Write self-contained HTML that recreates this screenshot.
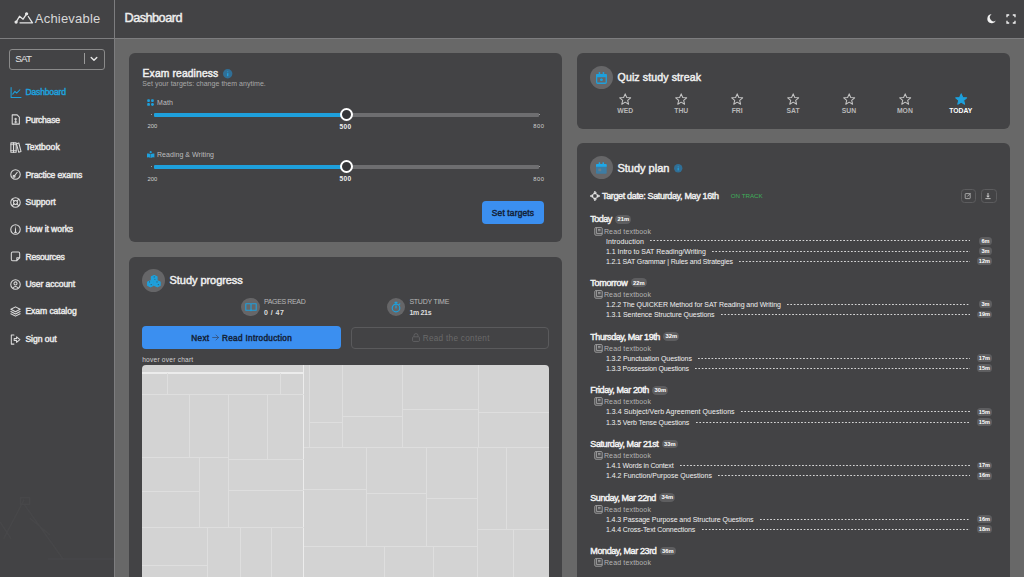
<!DOCTYPE html>
<html><head><meta charset="utf-8"><title>Dashboard</title>
<style>
html,body{margin:0;padding:0;width:1024px;height:577px;overflow:hidden;background:#686868;}
body{position:relative;font-family:"Liberation Sans",sans-serif;}
.t{position:absolute;white-space:pre;line-height:1;}
svg{overflow:visible}
</style></head><body>
<div style="position:absolute;left:0px;top:0px;width:1024px;height:38px;background:#434345;"></div>
<div style="position:absolute;left:0px;top:38px;width:1024px;height:1px;background:#7d7d7f;"></div>
<div style="position:absolute;left:0px;top:39px;width:114px;height:538px;background:#434345;"></div>
<div style="position:absolute;left:114px;top:0px;width:1px;height:577px;background:#7d7d7f;"></div>
<div style="position:absolute;left:129px;top:53px;width:433px;height:189px;background:#434345;border-radius:6px"></div>
<div style="position:absolute;left:129px;top:256.5px;width:433px;height:330px;background:#434345;border-radius:6px"></div>
<div style="position:absolute;left:577px;top:53px;width:433px;height:76px;background:#434345;border-radius:6px"></div>
<div style="position:absolute;left:577px;top:143px;width:433px;height:450px;background:#434345;border-radius:6px"></div>
<svg style="position:absolute;left:0;top:490px" width="114" height="80" viewBox="0 0 114 80" fill="none" stroke="#474749" stroke-width="1.4" stroke-linejoin="round"><path d="M3.7 48.6L24.1 9.7M24.1 14.3L63 69M48 69H114M0 32L11 48.6M29.7 28L50 45"/><rect x="20.4" y="7.8" width="9.3" height="6.5"/></svg>
<svg style="position:absolute;left:0;top:0" width="40" height="30" viewBox="0 0 40 30" fill="none" stroke="#e6e6e6" stroke-width="1.3" stroke-linecap="round" stroke-linejoin="round"><path d="M16.1 22.1L19.5 16.3L23.1 19.2L26.6 13.8"/><path d="M28.3 16.5L32.5 22.8H20"/><circle cx="16.1" cy="22.1" r="1" fill="#e6e6e6"/><circle cx="26.6" cy="13.8" r="1" fill="#e6e6e6"/></svg>
<svg style="position:absolute;left:987px;top:13.5px" width="9" height="9.2" viewBox="0 0 9 9.2"><path d="M4.6 0.2A4.5 4.5 0 1 0 8.9 6.6A3.2 3.2 0 0 1 4.6 0.2Z" fill="#f2f2f2"/></svg>
<svg style="position:absolute;left:1005.5px;top:13.5px" width="10" height="10" viewBox="0 0 10 10" fill="none" stroke="#f2f2f2" stroke-width="1.3"><path d="M1 3.2V1H3.2M6.8 1H9V3.2M9 6.8V9H6.8M3.2 9H1V6.8"/></svg>
<div style="position:absolute;left:9px;top:48.5px;width:94px;height:19px;border:1px solid #8a8a8a;border-radius:3px"></div>
<div style="position:absolute;left:83.5px;top:53.3px;width:1px;height:11px;background:#9a9a9a;"></div>
<svg style="position:absolute;left:89px;top:55px" width="10" height="8" viewBox="0 0 10 8" fill="none" stroke="#e6e6e6" stroke-width="1.4" stroke-linecap="round" stroke-linejoin="round"><path d="M2.2 2.4L5 5.2L7.8 2.4"/></svg>
<svg style="position:absolute;left:10px;top:86.9px" width="11" height="11" viewBox="0 0 10 10" fill="none" stroke-width="0.95" stroke-linecap="round" stroke-linejoin="round"><path d="M1 0.5V9.5H10" stroke="#1ea0dc"/><path d="M2.5 6.5L4.5 4L6 5.5L9 2.5" stroke="#1ea0dc"/></svg>
<svg style="position:absolute;left:10px;top:114.3px" width="11" height="11" viewBox="0 0 10 10" fill="none" stroke-width="0.95" stroke-linecap="round" stroke-linejoin="round"><path d="M2 0.8H6.5L8.5 2.8V9.2H2Z" stroke="#dcdcdc"/><path d="M5.2 3.8V8M4.2 4.6H6 M4.3 7.2H6.2" stroke="#dcdcdc"/></svg>
<svg style="position:absolute;left:10px;top:141.7px" width="11" height="11" viewBox="0 0 10 10" fill="none" stroke-width="0.95" stroke-linecap="round" stroke-linejoin="round"><rect x="0.8" y="0.8" width="2.4" height="8.6" stroke="#dcdcdc"/><rect x="3.2" y="0.8" width="2.4" height="8.6" stroke="#dcdcdc"/><path d="M5.9 1.6L8 0.9L10 8.6L7.9 9.3Z" stroke="#dcdcdc"/><path d="M0.8 2.4H5.6M0.8 7.8H5.6" stroke="#dcdcdc" stroke-width="0.7"/></svg>
<svg style="position:absolute;left:10px;top:169.1px" width="11" height="11" viewBox="0 0 10 10" fill="none" stroke-width="0.95" stroke-linecap="round" stroke-linejoin="round"><circle cx="5" cy="5" r="4.3" stroke="#dcdcdc"/><path d="M3.8 6.6L6.6 3" stroke="#dcdcdc"/><circle cx="3.7" cy="6.6" r="0.9" stroke="#dcdcdc"/></svg>
<svg style="position:absolute;left:10px;top:196.5px" width="11" height="11" viewBox="0 0 10 10" fill="none" stroke-width="0.95" stroke-linecap="round" stroke-linejoin="round"><circle cx="5" cy="5" r="4.3" stroke="#dcdcdc"/><circle cx="5" cy="5" r="1.8" stroke="#dcdcdc"/><path d="M2 2L3.7 3.7M8 2L6.3 3.7M2 8L3.7 6.3M8 8L6.3 6.3" stroke="#dcdcdc"/></svg>
<svg style="position:absolute;left:10px;top:223.9px" width="11" height="11" viewBox="0 0 10 10" fill="none" stroke-width="0.95" stroke-linecap="round" stroke-linejoin="round"><circle cx="5" cy="5" r="4.3" stroke="#dcdcdc"/><path d="M5 4.2V7.6M4.2 7.6H5.8" stroke="#dcdcdc"/><circle cx="5" cy="2.7" r="0.5" fill="#dcdcdc" stroke="none"/></svg>
<svg style="position:absolute;left:10px;top:251.3px" width="11" height="11" viewBox="0 0 10 10" fill="none" stroke-width="0.95" stroke-linecap="round" stroke-linejoin="round"><path d="M1.2 2.2Q1.2 1 2.4 1H7.6Q8.8 1 8.8 2.2V6.2L6.2 8.8H2.4Q1.2 8.8 1.2 7.6Z M8.8 6.2H6.2V8.8" stroke="#dcdcdc"/></svg>
<svg style="position:absolute;left:10px;top:278.7px" width="11" height="11" viewBox="0 0 10 10" fill="none" stroke-width="0.95" stroke-linecap="round" stroke-linejoin="round"><circle cx="5" cy="5" r="4.3" stroke="#dcdcdc"/><circle cx="5" cy="4" r="1.4" stroke="#dcdcdc"/><path d="M2.6 8.2Q5 5.6 7.4 8.2" stroke="#dcdcdc"/></svg>
<svg style="position:absolute;left:10px;top:306.1px" width="11" height="11" viewBox="0 0 10 10" fill="none" stroke-width="0.95" stroke-linecap="round" stroke-linejoin="round"><path d="M5 0.8L9.2 3L5 5.2L0.8 3Z M0.8 5L5 7.2L9.2 5 M0.8 7L5 9.2L9.2 7" stroke="#dcdcdc"/></svg>
<svg style="position:absolute;left:10px;top:333.5px" width="11" height="11" viewBox="0 0 10 10" fill="none" stroke-width="0.95" stroke-linecap="round" stroke-linejoin="round"><path d="M3.6 1H1.2V9.2H3.6" stroke="#dcdcdc"/><path d="M3.8 4.2H6V2.6L9 5.1L6 7.6V6H3.8Z" stroke="#dcdcdc"/></svg>
<svg style="position:absolute;left:223.1px;top:69.1px" width="9.4" height="9.4" viewBox="0 0 10 10"><circle cx="5" cy="5" r="5" fill="#306f96"/><rect x="4.3" y="4.3" width="1.4" height="3.4" rx="0.5" fill="#22a2dd"/><circle cx="5" cy="2.9" r="0.7" fill="#2a8cbf"/></svg>
<svg style="position:absolute;left:673.9px;top:163.7px" width="8.4" height="8.4" viewBox="0 0 10 10"><circle cx="5" cy="5" r="5" fill="#306f96"/><rect x="4.3" y="4.3" width="1.4" height="3.4" rx="0.5" fill="#22a2dd"/><circle cx="5" cy="2.9" r="0.7" fill="#2a8cbf"/></svg>
<svg style="position:absolute;left:147px;top:98.8px" width="7" height="7" viewBox="0 0 7 7" fill="#1ea0dc"><rect x="0.2" y="0.2" width="2.7" height="2.7" rx="0.9"/><rect x="4.1" y="0.2" width="2.7" height="2.7" rx="0.9"/><rect x="0.2" y="4.1" width="2.7" height="2.7" rx="0.9"/><circle cx="5.45" cy="5.45" r="1.45"/></svg>
<svg style="position:absolute;left:146.7px;top:150.5px" width="7.4" height="7" viewBox="0 0 7.4 7" fill="#1ea0dc"><path d="M0 2.6Q1.9 2 3.5 3V7Q1.9 6 0 6.6Z M7.4 2.6Q5.5 2 3.9 3V7Q5.5 6 7.4 6.6Z"/><circle cx="3.7" cy="1.2" r="1.1"/></svg>
<div style="position:absolute;left:153.5px;top:113.0px;width:193px;height:3.6px;background:#1ea0dc;border-radius:1px"></div>
<div style="position:absolute;left:346px;top:113.0px;width:192.5px;height:3.6px;background:#6e6e70;border-radius:1px"></div>
<div style="position:absolute;left:151.2px;top:114.2px;width:1.3px;height:1.3px;background:#9a9a9a;"></div>
<div style="position:absolute;left:538.5px;top:114.2px;width:1.3px;height:1.3px;background:#9a9a9a;"></div>
<div style="position:absolute;left:339.7px;top:108.1px;width:9.4px;height:9.4px;border-radius:50%;border:2px solid #ffffff;background:#363638"></div>
<div style="position:absolute;left:153.5px;top:165.0px;width:193px;height:3.6px;background:#1ea0dc;border-radius:1px"></div>
<div style="position:absolute;left:346px;top:165.0px;width:192.5px;height:3.6px;background:#6e6e70;border-radius:1px"></div>
<div style="position:absolute;left:151.2px;top:166.20000000000002px;width:1.3px;height:1.3px;background:#9a9a9a;"></div>
<div style="position:absolute;left:538.5px;top:166.20000000000002px;width:1.3px;height:1.3px;background:#9a9a9a;"></div>
<div style="position:absolute;left:339.7px;top:160.1px;width:9.4px;height:9.4px;border-radius:50%;border:2px solid #ffffff;background:#363638"></div>
<div style="position:absolute;left:482px;top:201px;width:62.4px;height:22.8px;background:#3b8ff0;border-radius:4px"></div>
<div style="position:absolute;left:142.0px;top:269.3px;width:23px;height:23px;border-radius:50%;background:#666668"></div>
<svg style="position:absolute;left:146px;top:273.5px" width="16" height="15" viewBox="0 0 16 15" stroke-linejoin="round"><g fill="#1ea0dc" stroke="#1ea0dc" stroke-width="1.2"><path d="M8.2 1.6L11 2.9V6.1L8.2 7.4L5.4 6.1V2.9Z"/><path d="M4.5 6.8L7.3 8.1V11.5L4.5 12.8L1.7 11.5V8.1Z"/><path d="M11.3 6.8L14.1 8.1V11.5L11.3 12.8L8.5 11.5V8.1Z"/></g><g fill="#3c5560"><circle cx="8.2" cy="2.9" r="0.55"/><circle cx="8.9" cy="5.3" r="0.55"/><circle cx="3.6" cy="7.9" r="0.55"/><circle cx="5.2" cy="10.6" r="0.55"/><circle cx="11" cy="7.9" r="0.55"/><circle cx="12.3" cy="10.6" r="0.55"/></g></svg>
<div style="position:absolute;left:241.4px;top:297.7px;width:18.6px;height:18.6px;border-radius:50%;background:#666668"></div>
<svg style="position:absolute;left:244.6px;top:302.6px" width="12" height="8.6" viewBox="0 0 12 8.6" fill="none" stroke="#1ea0dc" stroke-width="1.1" stroke-linejoin="round"><path d="M0.8 0.8H5.2Q6 0.8 6 1.6V7.8Q6 7.2 5.2 7.2H0.8Z M11.2 0.8H6.8Q6 0.8 6 1.6V7.8Q6 7.2 6.8 7.2H11.2Z"/></svg>
<div style="position:absolute;left:386.5px;top:297.7px;width:18.6px;height:18.6px;border-radius:50%;background:#666668"></div>
<svg style="position:absolute;left:390px;top:300.5px" width="12" height="12" viewBox="0 0 12 12" fill="none" stroke="#1ea0dc" stroke-width="1.2" stroke-linecap="round"><circle cx="6" cy="7" r="3.8"/><path d="M6 7V4.8M5 1.3H7M6 1.3V3.2M9 3.6L9.8 2.8"/></svg>
<div style="position:absolute;left:142.1px;top:326.4px;width:199.1px;height:22.6px;background:#3b8ff0;border-radius:4px"></div>
<svg style="position:absolute;left:212.3px;top:333.6px" width="7.5" height="7" viewBox="0 0 7.5 7" fill="none" stroke="#33507a" stroke-width="0.8" stroke-linecap="round" stroke-linejoin="round"><path d="M0.6 3.5H6.6M4 1L6.6 3.5L4 6"/></svg>
<div style="position:absolute;left:350.5px;top:326.5px;width:196.2px;height:20.8px;border:1px solid #5a5a5c;border-radius:4px"></div>
<svg style="position:absolute;left:412px;top:333px" width="8" height="9" viewBox="0 0 8 9" fill="none" stroke="#636365" stroke-width="0.9"><rect x="0.6" y="3.8" width="6.8" height="4.6" rx="0.8"/><path d="M2 3.8V2.6Q2 0.6 4 0.6Q6 0.6 6 2.6V3.8"/></svg>
<div style="position:absolute;left:142.2px;top:365.3px;width:406.6px;height:230px;background:#d3d3d3;border-radius:4px;overflow:hidden"></div>
<div style="position:absolute;left:142.2px;top:372.4px;width:161.4px;height:1.6px;background:#ececec;"></div>
<div style="position:absolute;left:302.8px;top:365.3px;width:1.6px;height:211.7px;background:#ececec;"></div>
<div style="position:absolute;left:167.0px;top:373.2px;width:1px;height:21.6px;background:#dedede;"></div>
<div style="position:absolute;left:279.9px;top:373.2px;width:1px;height:21.6px;background:#dedede;"></div>
<div style="position:absolute;left:142.2px;top:394.3px;width:161.4px;height:1px;background:#dedede;"></div>
<div style="position:absolute;left:188.5px;top:394.8px;width:1px;height:62.3px;background:#dedede;"></div>
<div style="position:absolute;left:227.9px;top:394.8px;width:1px;height:132.6px;background:#dedede;"></div>
<div style="position:absolute;left:267.0px;top:394.8px;width:1px;height:64.6px;background:#dedede;"></div>
<div style="position:absolute;left:142.2px;top:456.6px;width:86.2px;height:1px;background:#dedede;"></div>
<div style="position:absolute;left:228.4px;top:458.9px;width:75.2px;height:1px;background:#dedede;"></div>
<div style="position:absolute;left:199.3px;top:457.1px;width:1px;height:70.3px;background:#dedede;"></div>
<div style="position:absolute;left:142.2px;top:491.3px;width:57.6px;height:1px;background:#dedede;"></div>
<div style="position:absolute;left:228.4px;top:489.8px;width:75.2px;height:1px;background:#dedede;"></div>
<div style="position:absolute;left:142.2px;top:526.9px;width:161.4px;height:1px;background:#dedede;"></div>
<div style="position:absolute;left:206.7px;top:527.4px;width:1px;height:49.6px;background:#dedede;"></div>
<div style="position:absolute;left:239.9px;top:527.4px;width:1px;height:49.6px;background:#dedede;"></div>
<div style="position:absolute;left:270.8px;top:527.4px;width:1px;height:49.6px;background:#dedede;"></div>
<div style="position:absolute;left:142.2px;top:564.6px;width:65.0px;height:1px;background:#dedede;"></div>
<div style="position:absolute;left:309.2px;top:365.3px;width:1px;height:81.8px;background:#dedede;"></div>
<div style="position:absolute;left:342.1px;top:365.3px;width:1px;height:81.8px;background:#dedede;"></div>
<div style="position:absolute;left:402.0px;top:365.3px;width:1px;height:81.8px;background:#dedede;"></div>
<div style="position:absolute;left:478.1px;top:365.3px;width:1px;height:81.8px;background:#dedede;"></div>
<div style="position:absolute;left:309.7px;top:422.3px;width:32.9px;height:1px;background:#dedede;"></div>
<div style="position:absolute;left:342.6px;top:416.1px;width:59.9px;height:1px;background:#dedede;"></div>
<div style="position:absolute;left:402.5px;top:409.2px;width:76.1px;height:1px;background:#dedede;"></div>
<div style="position:absolute;left:478.6px;top:412.1px;width:70.2px;height:1px;background:#dedede;"></div>
<div style="position:absolute;left:303.6px;top:446.6px;width:245.2px;height:1px;background:#dedede;"></div>
<div style="position:absolute;left:366.4px;top:447.1px;width:1px;height:99.2px;background:#dedede;"></div>
<div style="position:absolute;left:426.0px;top:447.1px;width:1px;height:99.2px;background:#dedede;"></div>
<div style="position:absolute;left:477.0px;top:447.1px;width:1px;height:129.9px;background:#dedede;"></div>
<div style="position:absolute;left:505.7px;top:447.1px;width:1px;height:82.4px;background:#dedede;"></div>
<div style="position:absolute;left:303.6px;top:488.8px;width:63.3px;height:1px;background:#dedede;"></div>
<div style="position:absolute;left:366.9px;top:493.4px;width:59.6px;height:1px;background:#dedede;"></div>
<div style="position:absolute;left:426.5px;top:497.7px;width:51.0px;height:1px;background:#dedede;"></div>
<div style="position:absolute;left:303.6px;top:545.8px;width:173.9px;height:1px;background:#dedede;"></div>
<div style="position:absolute;left:477.5px;top:529.0px;width:71.3px;height:1px;background:#dedede;"></div>
<div style="position:absolute;left:384.4px;top:546.3px;width:1px;height:30.7px;background:#dedede;"></div>
<div style="position:absolute;left:432.5px;top:546.3px;width:1px;height:30.7px;background:#dedede;"></div>
<div style="position:absolute;left:512.8px;top:529.5px;width:1px;height:47.5px;background:#dedede;"></div>
<div style="position:absolute;left:589.9px;top:65.9px;width:23.3px;height:23.3px;border-radius:50%;background:#666668"></div>
<svg style="position:absolute;left:596px;top:71.8px" width="10.9" height="11.9" viewBox="0 0 10.9 11.9"><rect x="0.65" y="2.65" width="9.6" height="8.6" rx="1" fill="none" stroke="#1ea0dc" stroke-width="1.3"/><path d="M1.1 2H9.8Q10.9 2 10.9 3.1V5.2H0V3.1Q0 2 1.1 2Z" fill="#1ea0dc"/><rect x="2.7" y="0.1" width="1.5" height="2.6" rx="0.5" fill="#1ea0dc"/><rect x="6.7" y="0.1" width="1.5" height="2.6" rx="0.5" fill="#1ea0dc"/><path d="M5.45 6.2L7 7.3L6.4 9.1H4.5L3.9 7.3Z" fill="#1ea0dc"/></svg>
<svg style="position:absolute;left:619.1px;top:93.3px" width="12.4" height="12" viewBox="0 0 24 23" fill="none" stroke="#c4c4c4" stroke-width="2" stroke-linejoin="round"><path d="M12 1.5L15 8.6L22.6 9.2L16.8 14.2L18.6 21.6L12 17.6L5.4 21.6L7.2 14.2L1.4 9.2L9 8.6Z"/></svg>
<svg style="position:absolute;left:675.0px;top:93.3px" width="12.4" height="12" viewBox="0 0 24 23" fill="none" stroke="#c4c4c4" stroke-width="2" stroke-linejoin="round"><path d="M12 1.5L15 8.6L22.6 9.2L16.8 14.2L18.6 21.6L12 17.6L5.4 21.6L7.2 14.2L1.4 9.2L9 8.6Z"/></svg>
<svg style="position:absolute;left:730.9px;top:93.3px" width="12.4" height="12" viewBox="0 0 24 23" fill="none" stroke="#c4c4c4" stroke-width="2" stroke-linejoin="round"><path d="M12 1.5L15 8.6L22.6 9.2L16.8 14.2L18.6 21.6L12 17.6L5.4 21.6L7.2 14.2L1.4 9.2L9 8.6Z"/></svg>
<svg style="position:absolute;left:786.9px;top:93.3px" width="12.4" height="12" viewBox="0 0 24 23" fill="none" stroke="#c4c4c4" stroke-width="2" stroke-linejoin="round"><path d="M12 1.5L15 8.6L22.6 9.2L16.8 14.2L18.6 21.6L12 17.6L5.4 21.6L7.2 14.2L1.4 9.2L9 8.6Z"/></svg>
<svg style="position:absolute;left:842.8px;top:93.3px" width="12.4" height="12" viewBox="0 0 24 23" fill="none" stroke="#c4c4c4" stroke-width="2" stroke-linejoin="round"><path d="M12 1.5L15 8.6L22.6 9.2L16.8 14.2L18.6 21.6L12 17.6L5.4 21.6L7.2 14.2L1.4 9.2L9 8.6Z"/></svg>
<svg style="position:absolute;left:898.7px;top:93.3px" width="12.4" height="12" viewBox="0 0 24 23" fill="none" stroke="#c4c4c4" stroke-width="2" stroke-linejoin="round"><path d="M12 1.5L15 8.6L22.6 9.2L16.8 14.2L18.6 21.6L12 17.6L5.4 21.6L7.2 14.2L1.4 9.2L9 8.6Z"/></svg>
<svg style="position:absolute;left:954.6px;top:93.3px" width="12.4" height="12" viewBox="0 0 24 23" fill="#1ea0dc" stroke="#1ea0dc" stroke-width="2" stroke-linejoin="round"><path d="M12 1.5L15 8.6L22.6 9.2L16.8 14.2L18.6 21.6L12 17.6L5.4 21.6L7.2 14.2L1.4 9.2L9 8.6Z"/></svg>
<div style="position:absolute;left:590.0px;top:156.3px;width:23px;height:23px;border-radius:50%;background:#666668"></div>
<svg style="position:absolute;left:596px;top:162px" width="10.7" height="11.8" viewBox="0 0 10.7 11.8"><rect x="0" y="2" width="10.7" height="9.8" rx="1.1" fill="#3d7ca3"/><path d="M1.1 2H9.6Q10.7 2 10.7 3.1V4.8H0V3.1Q0 2 1.1 2Z" fill="#1ea8e8"/><rect x="2.7" y="0.2" width="1.5" height="2.4" rx="0.5" fill="#1ea8e8"/><rect x="6.5" y="0.2" width="1.5" height="2.4" rx="0.5" fill="#1ea8e8"/><rect x="2.3" y="6.5" width="2.9" height="2.7" rx="0.4" fill="#66808e"/></svg>
<svg style="position:absolute;left:590px;top:191px" width="10" height="10" viewBox="0 0 10 10" fill="none" stroke="#e8e8e8" stroke-width="1" stroke-linecap="round" stroke-linejoin="round"><circle cx="5" cy="5" r="2.6"/><path d="M5 0.6V3M5 7V9.4M0.6 5H3M7 5H9.4M3.8 1.8L5 0.6L6.2 1.8M3.8 8.2L5 9.4L6.2 8.2M1.8 3.8L0.6 5L1.8 6.2M8.2 3.8L9.4 5L8.2 6.2"/></svg>
<div style="position:absolute;left:961px;top:188.9px;width:13px;height:11.8px;border:1px solid #5c5c5e;border-radius:3.5px"></div>
<div style="position:absolute;left:980.5px;top:188.9px;width:14px;height:11.8px;border:1px solid #5c5c5e;border-radius:3.5px"></div>
<svg style="position:absolute;left:964px;top:191.5px" width="8" height="8" viewBox="0 0 8 8" fill="none" stroke="#bdbdbd" stroke-width="0.8"><rect x="1.2" y="1.6" width="5" height="5" rx="0.6"/><path d="M3.2 4.6L6.6 1.2"/></svg>
<svg style="position:absolute;left:984px;top:191.5px" width="8" height="8" viewBox="0 0 8 8" fill="#c8c8c8"><rect x="3.5" y="1" width="1" height="3.6"/><path d="M2.2 3.8H5.8L4 5.8Z"/><rect x="1.4" y="6.2" width="5.2" height="0.9"/></svg>
<div style="position:absolute;left:615.3px;top:214.9px;width:16.2px;height:8.8px;border-radius:4.4px;background:#5e5e60"></div>
<svg style="position:absolute;left:593.5px;top:226.5px" width="9" height="9" viewBox="0 0 9 9" fill="none" stroke="#a8a8a8" stroke-width="0.9"><rect x="0.8" y="0.6" width="7.4" height="7.6" rx="1"/><path d="M2.6 0.8v5.8M2.6 6.4h5.6M4 2.4h2.6M4 3.8h2.6"/></svg>
<div style="position:absolute;left:650.4px;top:240px;width:319.6px;height:1px;background-image:linear-gradient(90deg,#d6d6d6 0 1.5px,transparent 1.5px 100%);background-size:3.4px 1px"></div>
<div style="position:absolute;left:978.9px;top:236.9px;width:13.1px;height:7.8px;border-radius:3.6px;background:#5e5e60"></div>
<div style="position:absolute;left:712.4px;top:251px;width:257.6px;height:1px;background-image:linear-gradient(90deg,#d6d6d6 0 1.5px,transparent 1.5px 100%);background-size:3.4px 1px"></div>
<div style="position:absolute;left:978.9px;top:247.2px;width:13.1px;height:7.8px;border-radius:3.6px;background:#5e5e60"></div>
<div style="position:absolute;left:739.4px;top:261px;width:230.6px;height:1px;background-image:linear-gradient(90deg,#d6d6d6 0 1.5px,transparent 1.5px 100%);background-size:3.4px 1px"></div>
<div style="position:absolute;left:976.8px;top:257.4px;width:15.2px;height:7.8px;border-radius:3.6px;background:#5e5e60"></div>
<div style="position:absolute;left:630.7px;top:278.4px;width:16.2px;height:8.8px;border-radius:4.4px;background:#5e5e60"></div>
<svg style="position:absolute;left:593.5px;top:290.0px" width="9" height="9" viewBox="0 0 9 9" fill="none" stroke="#a8a8a8" stroke-width="0.9"><rect x="0.8" y="0.6" width="7.4" height="7.6" rx="1"/><path d="M2.6 0.8v5.8M2.6 6.4h5.6M4 2.4h2.6M4 3.8h2.6"/></svg>
<div style="position:absolute;left:787.4px;top:304px;width:182.6px;height:1px;background-image:linear-gradient(90deg,#d6d6d6 0 1.5px,transparent 1.5px 100%);background-size:3.4px 1px"></div>
<div style="position:absolute;left:978.9px;top:300.4px;width:13.1px;height:7.8px;border-radius:3.6px;background:#5e5e60"></div>
<div style="position:absolute;left:721.1px;top:314px;width:248.9px;height:1px;background-image:linear-gradient(90deg,#d6d6d6 0 1.5px,transparent 1.5px 100%);background-size:3.4px 1px"></div>
<div style="position:absolute;left:976.8px;top:310.6px;width:15.2px;height:7.8px;border-radius:3.6px;background:#5e5e60"></div>
<div style="position:absolute;left:663.3px;top:332.2px;width:16.2px;height:8.8px;border-radius:4.4px;background:#5e5e60"></div>
<svg style="position:absolute;left:593.5px;top:343.8px" width="9" height="9" viewBox="0 0 9 9" fill="none" stroke="#a8a8a8" stroke-width="0.9"><rect x="0.8" y="0.6" width="7.4" height="7.6" rx="1"/><path d="M2.6 0.8v5.8M2.6 6.4h5.6M4 2.4h2.6M4 3.8h2.6"/></svg>
<div style="position:absolute;left:698.4px;top:358px;width:271.6px;height:1px;background-image:linear-gradient(90deg,#d6d6d6 0 1.5px,transparent 1.5px 100%);background-size:3.4px 1px"></div>
<div style="position:absolute;left:976.8px;top:354.2px;width:15.2px;height:7.8px;border-radius:3.6px;background:#5e5e60"></div>
<div style="position:absolute;left:695.4px;top:368px;width:274.6px;height:1px;background-image:linear-gradient(90deg,#d6d6d6 0 1.5px,transparent 1.5px 100%);background-size:3.4px 1px"></div>
<div style="position:absolute;left:976.8px;top:364.4px;width:15.2px;height:7.8px;border-radius:3.6px;background:#5e5e60"></div>
<div style="position:absolute;left:652.3px;top:385.8px;width:16.2px;height:8.8px;border-radius:4.4px;background:#5e5e60"></div>
<svg style="position:absolute;left:593.5px;top:397.4px" width="9" height="9" viewBox="0 0 9 9" fill="none" stroke="#a8a8a8" stroke-width="0.9"><rect x="0.8" y="0.6" width="7.4" height="7.6" rx="1"/><path d="M2.6 0.8v5.8M2.6 6.4h5.6M4 2.4h2.6M4 3.8h2.6"/></svg>
<div style="position:absolute;left:741.1px;top:411px;width:228.9px;height:1px;background-image:linear-gradient(90deg,#d6d6d6 0 1.5px,transparent 1.5px 100%);background-size:3.4px 1px"></div>
<div style="position:absolute;left:976.8px;top:407.8px;width:15.2px;height:7.8px;border-radius:3.6px;background:#5e5e60"></div>
<div style="position:absolute;left:695.8px;top:422px;width:274.2px;height:1px;background-image:linear-gradient(90deg,#d6d6d6 0 1.5px,transparent 1.5px 100%);background-size:3.4px 1px"></div>
<div style="position:absolute;left:976.8px;top:418.0px;width:15.2px;height:7.8px;border-radius:3.6px;background:#5e5e60"></div>
<div style="position:absolute;left:661.8px;top:439.5px;width:16.2px;height:8.8px;border-radius:4.4px;background:#5e5e60"></div>
<svg style="position:absolute;left:593.5px;top:451.1px" width="9" height="9" viewBox="0 0 9 9" fill="none" stroke="#a8a8a8" stroke-width="0.9"><rect x="0.8" y="0.6" width="7.4" height="7.6" rx="1"/><path d="M2.6 0.8v5.8M2.6 6.4h5.6M4 2.4h2.6M4 3.8h2.6"/></svg>
<div style="position:absolute;left:680.1px;top:465px;width:289.9px;height:1px;background-image:linear-gradient(90deg,#d6d6d6 0 1.5px,transparent 1.5px 100%);background-size:3.4px 1px"></div>
<div style="position:absolute;left:976.8px;top:461.5px;width:15.2px;height:7.8px;border-radius:3.6px;background:#5e5e60"></div>
<div style="position:absolute;left:718.4px;top:475px;width:251.6px;height:1px;background-image:linear-gradient(90deg,#d6d6d6 0 1.5px,transparent 1.5px 100%);background-size:3.4px 1px"></div>
<div style="position:absolute;left:976.8px;top:471.8px;width:15.2px;height:7.8px;border-radius:3.6px;background:#5e5e60"></div>
<div style="position:absolute;left:659.3px;top:493.0px;width:16.2px;height:8.8px;border-radius:4.4px;background:#5e5e60"></div>
<svg style="position:absolute;left:593.5px;top:504.6px" width="9" height="9" viewBox="0 0 9 9" fill="none" stroke="#a8a8a8" stroke-width="0.9"><rect x="0.8" y="0.6" width="7.4" height="7.6" rx="1"/><path d="M2.6 0.8v5.8M2.6 6.4h5.6M4 2.4h2.6M4 3.8h2.6"/></svg>
<div style="position:absolute;left:760.1px;top:519px;width:209.9px;height:1px;background-image:linear-gradient(90deg,#d6d6d6 0 1.5px,transparent 1.5px 100%);background-size:3.4px 1px"></div>
<div style="position:absolute;left:976.8px;top:515.0px;width:15.2px;height:7.8px;border-radius:3.6px;background:#5e5e60"></div>
<div style="position:absolute;left:701.8px;top:529px;width:268.2px;height:1px;background-image:linear-gradient(90deg,#d6d6d6 0 1.5px,transparent 1.5px 100%);background-size:3.4px 1px"></div>
<div style="position:absolute;left:976.8px;top:525.2px;width:15.2px;height:7.8px;border-radius:3.6px;background:#5e5e60"></div>
<div style="position:absolute;left:659.8px;top:546.5px;width:16.2px;height:8.8px;border-radius:4.4px;background:#5e5e60"></div>
<svg style="position:absolute;left:593.5px;top:558.1px" width="9" height="9" viewBox="0 0 9 9" fill="none" stroke="#a8a8a8" stroke-width="0.9"><rect x="0.8" y="0.6" width="7.4" height="7.6" rx="1"/><path d="M2.6 0.8v5.8M2.6 6.4h5.6M4 2.4h2.6M4 3.8h2.6"/></svg>
<span class="t" style="left:124.50px;top:12px;font-size:12.7px;font-weight:400;color:#eeeeee;-webkit-text-stroke:0.45px #eeeeee;letter-spacing:-0.510px;">Dashboard</span>
<span class="t" style="left:34.80px;top:12px;font-size:13px;font-weight:300;color:#d8d8d8;letter-spacing:0.210px;">Achievable</span>
<span class="t" style="left:25.40px;top:88px;font-size:8.6px;font-weight:400;color:#1ea0dc;-webkit-text-stroke:0.45px #1ea0dc;letter-spacing:-0.181px;">Dashboard</span>
<span class="t" style="left:25.40px;top:116px;font-size:8.6px;font-weight:400;color:#e8e8e8;-webkit-text-stroke:0.45px #e8e8e8;letter-spacing:-0.245px;">Purchase</span>
<span class="t" style="left:25.40px;top:143px;font-size:8.6px;font-weight:400;color:#e8e8e8;-webkit-text-stroke:0.45px #e8e8e8;letter-spacing:-0.015px;">Textbook</span>
<span class="t" style="left:25.40px;top:171px;font-size:8.6px;font-weight:400;color:#e8e8e8;-webkit-text-stroke:0.45px #e8e8e8;letter-spacing:-0.150px;">Practice exams</span>
<span class="t" style="left:25.40px;top:198px;font-size:8.6px;font-weight:400;color:#e8e8e8;-webkit-text-stroke:0.45px #e8e8e8;letter-spacing:0.032px;">Support</span>
<span class="t" style="left:25.40px;top:225px;font-size:8.6px;font-weight:400;color:#e8e8e8;-webkit-text-stroke:0.45px #e8e8e8;letter-spacing:-0.084px;">How it works</span>
<span class="t" style="left:25.40px;top:253px;font-size:8.6px;font-weight:400;color:#e8e8e8;-webkit-text-stroke:0.45px #e8e8e8;letter-spacing:-0.210px;">Resources</span>
<span class="t" style="left:25.40px;top:280px;font-size:8.6px;font-weight:400;color:#e8e8e8;-webkit-text-stroke:0.45px #e8e8e8;letter-spacing:-0.076px;">User account</span>
<span class="t" style="left:25.40px;top:307px;font-size:8.6px;font-weight:400;color:#e8e8e8;-webkit-text-stroke:0.45px #e8e8e8;letter-spacing:-0.071px;">Exam catalog</span>
<span class="t" style="left:25.40px;top:335px;font-size:8.6px;font-weight:400;color:#e8e8e8;-webkit-text-stroke:0.45px #e8e8e8;letter-spacing:-0.035px;">Sign out</span>
<span class="t" style="left:15.30px;top:54px;font-size:9.8px;font-weight:400;color:#e4e4e4;letter-spacing:-0.864px;">SAT</span>
<span class="t" style="left:142.60px;top:69px;font-size:10.3px;font-weight:400;color:#f0f0f0;-webkit-text-stroke:0.45px #f0f0f0;letter-spacing:0.136px;">Exam readiness</span>
<span class="t" style="left:142.30px;top:80px;font-size:7px;font-weight:400;color:#a8a8a8;letter-spacing:0.035px;">Set your targets: change them anytime.</span>
<span class="t" style="left:157.00px;top:99px;font-size:7px;font-weight:400;color:#bdbdbd;letter-spacing:0.079px;">Math</span>
<span class="t" style="left:147.50px;top:124px;font-size:5.8px;font-weight:400;color:#d0d0d0;letter-spacing:0.064px;">200</span>
<span class="t" style="left:339.40px;top:124px;font-size:6.6px;font-weight:700;color:#eeeeee;letter-spacing:0.392px;">500</span>
<span class="t" style="left:533.30px;top:124px;font-size:5.8px;font-weight:400;color:#d0d0d0;letter-spacing:0.464px;">800</span>
<span class="t" style="left:157.00px;top:151px;font-size:7px;font-weight:400;color:#bdbdbd;letter-spacing:0.044px;">Reading &amp; Writing</span>
<span class="t" style="left:147.50px;top:177px;font-size:5.8px;font-weight:400;color:#d0d0d0;letter-spacing:0.064px;">200</span>
<span class="t" style="left:339.40px;top:176px;font-size:6.6px;font-weight:700;color:#eeeeee;letter-spacing:0.392px;">500</span>
<span class="t" style="left:533.30px;top:177px;font-size:5.8px;font-weight:400;color:#d0d0d0;letter-spacing:0.464px;">800</span>
<span class="t" style="left:491.80px;top:209px;font-size:8.4px;font-weight:400;color:#13233a;-webkit-text-stroke:0.45px #13233a;letter-spacing:0.168px;">Set targets</span>
<span class="t" style="left:169.60px;top:275px;font-size:11px;font-weight:400;color:#f0f0f0;-webkit-text-stroke:0.45px #f0f0f0;letter-spacing:-0.060px;">Study progress</span>
<span class="t" style="left:264.00px;top:298px;font-size:7px;font-weight:400;color:#b8b8b8;letter-spacing:-0.367px;">PAGES READ</span>
<span class="t" style="left:264.00px;top:309px;font-size:7px;font-weight:700;color:#dddddd;letter-spacing:0.457px;">0 / 47</span>
<span class="t" style="left:409.40px;top:298px;font-size:7px;font-weight:400;color:#b8b8b8;letter-spacing:-0.238px;">STUDY TIME</span>
<span class="t" style="left:409.40px;top:309px;font-size:7px;font-weight:700;color:#dddddd;letter-spacing:-0.310px;">1m 21s</span>
<span class="t" style="left:191.30px;top:335px;font-size:8.2px;font-weight:400;color:#13233a;-webkit-text-stroke:0.45px #13233a;letter-spacing:0.319px;">Next</span>
<span class="t" style="left:222.00px;top:335px;font-size:8.2px;font-weight:400;color:#13233a;-webkit-text-stroke:0.45px #13233a;letter-spacing:0.322px;">Read Introduction</span>
<span class="t" style="left:422.70px;top:335px;font-size:8.2px;font-weight:400;color:#6a6a6a;letter-spacing:0.295px;">Read the content</span>
<span class="t" style="left:142.20px;top:357px;font-size:6.6px;font-weight:400;color:#cfcfcf;letter-spacing:0.223px;">hover over chart</span>
<span class="t" style="left:617.60px;top:72px;font-size:10.6px;font-weight:400;color:#f0f0f0;-webkit-text-stroke:0.45px #f0f0f0;letter-spacing:0.097px;">Quiz study streak</span>
<span class="t" style="left:625.30px;top:108px;font-size:6.8px;font-weight:700;color:#b8b8b8;transform:translateX(-50%);">WED</span>
<span class="t" style="left:681.22px;top:108px;font-size:6.8px;font-weight:700;color:#b8b8b8;transform:translateX(-50%);">THU</span>
<span class="t" style="left:737.14px;top:108px;font-size:6.8px;font-weight:700;color:#b8b8b8;transform:translateX(-50%);">FRI</span>
<span class="t" style="left:793.06px;top:108px;font-size:6.8px;font-weight:700;color:#b8b8b8;transform:translateX(-50%);">SAT</span>
<span class="t" style="left:848.98px;top:108px;font-size:6.8px;font-weight:700;color:#b8b8b8;transform:translateX(-50%);">SUN</span>
<span class="t" style="left:904.90px;top:108px;font-size:6.8px;font-weight:700;color:#b8b8b8;transform:translateX(-50%);">MON</span>
<span class="t" style="left:960.82px;top:108px;font-size:6.8px;font-weight:700;color:#ffffff;transform:translateX(-50%);">TODAY</span>
<span class="t" style="left:617.40px;top:163px;font-size:11px;font-weight:400;color:#f0f0f0;-webkit-text-stroke:0.45px #f0f0f0;letter-spacing:0.002px;">Study plan</span>
<span class="t" style="left:602.00px;top:192px;font-size:9px;font-weight:400;color:#eeeeee;-webkit-text-stroke:0.45px #eeeeee;letter-spacing:-0.347px;">Target date: Saturday, May 16th</span>
<span class="t" style="left:730.80px;top:193px;font-size:6.2px;font-weight:400;color:#3fae5a;">ON TRACK</span>
<span class="t" style="left:590.30px;top:215px;font-size:9px;font-weight:400;color:#f2f2f2;-webkit-text-stroke:0.45px #f2f2f2;letter-spacing:-0.508px;">Today</span>
<span class="t" style="left:623.40px;top:217px;font-size:5.8px;font-weight:700;color:#ffffff;transform:translateX(-50%);">21m</span>
<span class="t" style="left:603.90px;top:228px;font-size:7px;font-weight:400;color:#b4b4b4;letter-spacing:0.154px;">Read textbook</span>
<span class="t" style="left:605.90px;top:238px;font-size:7px;font-weight:400;color:#f0f0f0;letter-spacing:0.128px;">Introduction</span>
<span class="t" style="left:985.45px;top:239px;font-size:5.6px;font-weight:700;color:#ffffff;transform:translateX(-50%);">6m</span>
<span class="t" style="left:605.90px;top:248px;font-size:7px;font-weight:400;color:#f0f0f0;">1.1 Intro to SAT Reading/Writing</span>
<span class="t" style="left:985.45px;top:249px;font-size:5.6px;font-weight:700;color:#ffffff;transform:translateX(-50%);">3m</span>
<span class="t" style="left:605.90px;top:258px;font-size:7px;font-weight:400;color:#f0f0f0;letter-spacing:-0.145px;">1.2.1 SAT Grammar | Rules and Strategies</span>
<span class="t" style="left:984.40px;top:259px;font-size:5.6px;font-weight:700;color:#ffffff;transform:translateX(-50%);">12m</span>
<span class="t" style="left:590.30px;top:279px;font-size:9px;font-weight:400;color:#f2f2f2;-webkit-text-stroke:0.45px #f2f2f2;letter-spacing:-0.302px;">Tomorrow</span>
<span class="t" style="left:638.80px;top:281px;font-size:5.8px;font-weight:700;color:#ffffff;transform:translateX(-50%);">22m</span>
<span class="t" style="left:603.90px;top:291px;font-size:7px;font-weight:400;color:#b4b4b4;letter-spacing:0.154px;">Read textbook</span>
<span class="t" style="left:605.90px;top:301px;font-size:7px;font-weight:400;color:#f0f0f0;letter-spacing:-0.076px;">1.2.2 The QUICKER Method for SAT Reading and Writing</span>
<span class="t" style="left:985.45px;top:302px;font-size:5.6px;font-weight:700;color:#ffffff;transform:translateX(-50%);">3m</span>
<span class="t" style="left:605.90px;top:311px;font-size:7px;font-weight:400;color:#f0f0f0;letter-spacing:-0.067px;">1.3.1 Sentence Structure Questions</span>
<span class="t" style="left:984.40px;top:312px;font-size:5.6px;font-weight:700;color:#ffffff;transform:translateX(-50%);">19m</span>
<span class="t" style="left:590.30px;top:333px;font-size:9px;font-weight:400;color:#f2f2f2;-webkit-text-stroke:0.45px #f2f2f2;letter-spacing:-0.434px;">Thursday, Mar 19th</span>
<span class="t" style="left:671.40px;top:334px;font-size:5.8px;font-weight:700;color:#ffffff;transform:translateX(-50%);">32m</span>
<span class="t" style="left:603.90px;top:345px;font-size:7px;font-weight:400;color:#b4b4b4;letter-spacing:0.154px;">Read textbook</span>
<span class="t" style="left:605.90px;top:355px;font-size:7px;font-weight:400;color:#f0f0f0;letter-spacing:-0.075px;">1.3.2 Punctuation Questions</span>
<span class="t" style="left:984.40px;top:356px;font-size:5.6px;font-weight:700;color:#ffffff;transform:translateX(-50%);">17m</span>
<span class="t" style="left:605.90px;top:365px;font-size:7px;font-weight:400;color:#f0f0f0;letter-spacing:-0.151px;">1.3.3 Possession Questions</span>
<span class="t" style="left:984.40px;top:366px;font-size:5.6px;font-weight:700;color:#ffffff;transform:translateX(-50%);">15m</span>
<span class="t" style="left:590.30px;top:386px;font-size:9px;font-weight:400;color:#f2f2f2;-webkit-text-stroke:0.45px #f2f2f2;letter-spacing:-0.391px;">Friday, Mar 20th</span>
<span class="t" style="left:660.40px;top:388px;font-size:5.8px;font-weight:700;color:#ffffff;transform:translateX(-50%);">30m</span>
<span class="t" style="left:603.90px;top:398px;font-size:7px;font-weight:400;color:#b4b4b4;letter-spacing:0.154px;">Read textbook</span>
<span class="t" style="left:605.90px;top:408px;font-size:7px;font-weight:400;color:#f0f0f0;letter-spacing:0.060px;">1.3.4 Subject/Verb Agreement Questions</span>
<span class="t" style="left:984.40px;top:410px;font-size:5.6px;font-weight:700;color:#ffffff;transform:translateX(-50%);">15m</span>
<span class="t" style="left:605.90px;top:419px;font-size:7px;font-weight:400;color:#f0f0f0;letter-spacing:-0.099px;">1.3.5 Verb Tense Questions</span>
<span class="t" style="left:984.40px;top:420px;font-size:5.6px;font-weight:700;color:#ffffff;transform:translateX(-50%);">15m</span>
<span class="t" style="left:590.30px;top:440px;font-size:9px;font-weight:400;color:#f2f2f2;-webkit-text-stroke:0.45px #f2f2f2;letter-spacing:-0.404px;">Saturday, Mar 21st</span>
<span class="t" style="left:669.90px;top:442px;font-size:5.8px;font-weight:700;color:#ffffff;transform:translateX(-50%);">33m</span>
<span class="t" style="left:603.90px;top:452px;font-size:7px;font-weight:400;color:#b4b4b4;letter-spacing:0.154px;">Read textbook</span>
<span class="t" style="left:605.90px;top:462px;font-size:7px;font-weight:400;color:#f0f0f0;letter-spacing:-0.161px;">1.4.1 Words in Context</span>
<span class="t" style="left:984.40px;top:463px;font-size:5.6px;font-weight:700;color:#ffffff;transform:translateX(-50%);">17m</span>
<span class="t" style="left:605.90px;top:472px;font-size:7px;font-weight:400;color:#f0f0f0;letter-spacing:0.005px;">1.4.2 Function/Purpose Questions</span>
<span class="t" style="left:984.40px;top:473px;font-size:5.6px;font-weight:700;color:#ffffff;transform:translateX(-50%);">16m</span>
<span class="t" style="left:590.30px;top:494px;font-size:9px;font-weight:400;color:#f2f2f2;-webkit-text-stroke:0.45px #f2f2f2;letter-spacing:-0.459px;">Sunday, Mar 22nd</span>
<span class="t" style="left:667.40px;top:495px;font-size:5.8px;font-weight:700;color:#ffffff;transform:translateX(-50%);">34m</span>
<span class="t" style="left:603.90px;top:506px;font-size:7px;font-weight:400;color:#b4b4b4;letter-spacing:0.154px;">Read textbook</span>
<span class="t" style="left:605.90px;top:516px;font-size:7px;font-weight:400;color:#f0f0f0;letter-spacing:-0.057px;">1.4.3 Passage Purpose and Structure Questions</span>
<span class="t" style="left:984.40px;top:517px;font-size:5.6px;font-weight:700;color:#ffffff;transform:translateX(-50%);">16m</span>
<span class="t" style="left:605.90px;top:526px;font-size:7px;font-weight:400;color:#f0f0f0;letter-spacing:-0.090px;">1.4.4 Cross-Text Connections</span>
<span class="t" style="left:984.40px;top:527px;font-size:5.6px;font-weight:700;color:#ffffff;transform:translateX(-50%);">18m</span>
<span class="t" style="left:590.30px;top:547px;font-size:9px;font-weight:400;color:#f2f2f2;-webkit-text-stroke:0.45px #f2f2f2;letter-spacing:-0.392px;">Monday, Mar 23rd</span>
<span class="t" style="left:667.90px;top:549px;font-size:5.8px;font-weight:700;color:#ffffff;transform:translateX(-50%);">36m</span>
<span class="t" style="left:603.90px;top:559px;font-size:7px;font-weight:400;color:#b4b4b4;letter-spacing:0.154px;">Read textbook</span>
</body></html>
